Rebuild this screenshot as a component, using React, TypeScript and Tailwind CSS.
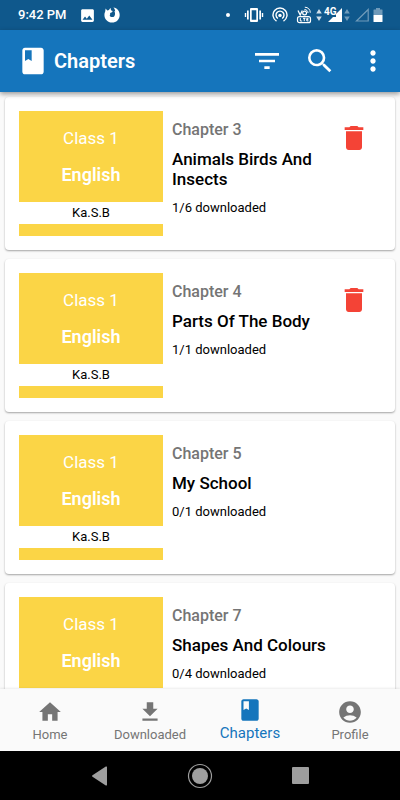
import { useState } from "react";
import {
  MdAccountCircle,
  MdClass,
  MdDelete,
  MdFileDownload,
  MdFilterList,
  MdHome,
  MdImage,
  MdMoreVert,
  MdSearch,
} from "react-icons/md";

type Chapter = {
  number: number;
  title: string;
  downloaded: number;
  total: number;
};

const initialChapters: Chapter[] = [
  { number: 3, title: "Animals Birds And Insects", downloaded: 1, total: 6 },
  { number: 4, title: "Parts Of The Body", downloaded: 1, total: 1 },
  { number: 5, title: "My School", downloaded: 0, total: 1 },
  { number: 7, title: "Shapes And Colours", downloaded: 0, total: 4 },
];

const tabs = [
  { name: "Home", Icon: MdHome },
  { name: "Downloaded", Icon: MdFileDownload },
  { name: "Chapters", Icon: MdClass },
  { name: "Profile", Icon: MdAccountCircle },
];

const FirefoxIcon = () => (
  <svg viewBox="0 0 16 16" className="size-4" aria-hidden="true">
    <path
      fill="currentColor"
      d="M1.600 1.500 3.300 3.400 5 3.100C5.400 2.100 6 1.400 6.800 1c-.2 1 0 1.900.5 2.500l1.400.5-.7 1.200-1.900.7.1 1.300c-.7.900-.5 2 .4 2.500 1.300.800 3.100.400 3.900-.8 1-1.500.6-3.500-.4-4.800l1.100.3C11.100 2.900 10.500 1.700 9.400.6c3.800.6 6.300 3.600 6.300 7.300 0 4.300-3.400 7.700-7.700 7.700S.4 12.200.4 8c0-1.300.2-2.500.8-3.500z"
    />
  </svg>
);

const VibrateIcon = () => (
  <svg viewBox="0 0 20 16" className="h-4 w-5" fill="currentColor" aria-hidden="true">
    <path fillRule="evenodd" d="M7 1h6a1 1 0 0 1 1 1v12a1 1 0 0 1-1 1H7a1 1 0 0 1-1-1V2a1 1 0 0 1 1-1zm.7 2.200v9.600h4.600V3.200z" />
    <path d="M3 3.500h1.700v9H3zM15.300 3.500H17v9h-1.700zM.8 6h1.400v4H.8zM17.800 6h1.400v4h-1.400z" />
  </svg>
);

const HotspotIcon = () => (
  <svg viewBox="0 0 16 16" className="size-4" fill="none" stroke="currentColor" strokeWidth="1.400" aria-hidden="true">
    <path d="M4.500 14.100a7 7 0 1 1 7 0" />
    <path d="M5.900 11.500a4 4 0 1 1 4.200 0" />
    <circle cx="8" cy="8.400" r="1.700" fill="currentColor" stroke="none" />
  </svg>
);

const VolteIcon = () => (
  <svg viewBox="0 0 16 18" className="h-[18px] w-4" fill="none" stroke="currentColor" aria-hidden="true">
    <path strokeWidth="1.300" d="M2 4.500 4.200 9 6.300 4.500" />
    <circle cx="8.600" cy="7" r="1.900" strokeWidth="1.200" />
    <path strokeWidth="1" d="M8.500 3.500c2 0 3.500 1.500 3.500 3.500M8.800 1.200c3.200 0 5.500 2.300 5.500 5.500" />
    <rect x="1.500" y="10.700" width="13" height="6" rx="2" strokeWidth="1.200" />
    <path strokeWidth="1" d="M4.300 12v3h1.900M7 12.300h2.500M8.250 12v3.200M12.500 12.300h-1.700v2.600h1.700M10.800 13.600h1.500" />
  </svg>
);

const DataArrows = ({ className }: { className?: string }) => (
  <svg viewBox="0 0 6 14" className={`h-3.5 w-1.5 ${className}`} fill="currentColor" aria-hidden="true">
    <path d="M3 1 5.800 5.500H.2zM3 13 .2 8.500h5.600z" />
  </svg>
);

const StatusBar = () => (
  <div className="flex h-[30px] shrink-0 items-center bg-[#0f588c] pr-[17px] pl-[18px] text-white">
    <span className="text-[13px] font-medium">9:42 PM</span>
    <MdImage size={17} className="ml-3" aria-hidden="true" />
    <span className="ml-2">
      <FirefoxIcon />
    </span>
    <span className="ml-auto size-1 rounded-full bg-white" />
    <span className="ml-3.5 flex items-center gap-2">
      <VibrateIcon />
      <HotspotIcon />
      <VolteIcon />
    </span>
    <DataArrows className="ml-1 opacity-80" />
    <span className="relative ml-0.5 h-4 w-[18px]">
      <span className="absolute top-0 left-0 text-[10px] leading-[10px] font-bold">4G</span>
      <svg viewBox="0 0 18 16" className="h-4 w-[18px]" fill="currentColor" aria-hidden="true">
        <path d="M18 1v14H4l5-5h3V7z" />
      </svg>
    </span>
    <DataArrows className="ml-0.5 opacity-40" />
    <svg viewBox="0 0 14 14" className="ml-[5px] size-3.5 opacity-40" fill="none" stroke="currentColor" strokeWidth="1.200" aria-hidden="true">
      <path d="M13.200 1.500v11.500H1.500z" />
    </svg>
    <svg viewBox="0 0 10 14" className="ml-1 h-3.5 w-2.5" fill="currentColor" aria-hidden="true">
      <path opacity=".4" d="M3 0h4v1.500h2a.5.5 0 0 1 .5.5v5h-9V2a.5.5 0 0 1 .5-.5h2z" />
      <path d="M.5 7h9v6.500a.5.500 0 0 1-.5.500H1a.5.500 0 0 1-.5-.500z" />
    </svg>
  </div>
);

const ChapterCard = ({ chapter, onDelete }: { chapter: Chapter; onDelete: () => void }) => (
  <li className="flex rounded-sm bg-white p-3.5 shadow-[0_1px_2px_rgba(0,0,0,0.35)]">
    <div className="w-36 shrink-0 bg-[#fbd546] text-center">
      <div className="flex h-[91px] flex-col items-center justify-center gap-[17px] text-white">
        <p className="text-[17px] leading-5">Class 1</p>
        <p className="text-lg leading-5 font-semibold">English</p>
      </div>
      <p className="mb-3 bg-white text-[13px] leading-[22px] text-black">Ka.S.B</p>
    </div>
    <div className="ml-[9px] flex min-w-0 flex-1 flex-col gap-[9px] pt-[9px] text-black">
      <p className="text-base leading-5 font-medium text-[#757575]">Chapter {chapter.number}</p>
      <h2 className="text-[17px] leading-5 font-medium">{chapter.title}</h2>
      <p className="text-[13px] leading-5">
        {chapter.downloaded}/{chapter.total} downloaded
      </p>
    </div>
    <div className="w-[43px] shrink-0 pt-[11px]">
      {chapter.downloaded > 0 && (
        <button type="button" onClick={onDelete} aria-label={`Delete chapter ${chapter.number}`} className="block text-[#f44336]">
          <MdDelete size={32} />
        </button>
      )}
    </div>
  </li>
);

const App = () => {
  const [chapters, setChapters] = useState(initialChapters);
  const [activeTab, setActiveTab] = useState("Chapters");

  const removeDownloads = (number: number) => {
    setChapters(chapters.map((c) => (c.number === number ? { ...c, downloaded: 0 } : c)));
  };

  return (
    <div className="flex h-screen flex-col bg-[#fafafa] font-['Roboto',sans-serif]">
      <StatusBar />

      <header className="z-10 flex h-[62px] shrink-0 items-center bg-[#1575bc] pr-[11px] pl-[17px] text-white shadow-[0_2px_5px_rgba(0,0,0,0.4)]">
        <MdClass size={32} aria-hidden="true" />
        <h1 className="ml-[5px] text-xl font-semibold">Chapters</h1>
        <div className="ml-auto flex gap-[21px]">
          <button type="button" aria-label="Filter">
            <MdFilterList size={32} />
          </button>
          <button type="button" aria-label="Search">
            <MdSearch size={32} />
          </button>
          <button type="button" aria-label="More options">
            <MdMoreVert size={32} />
          </button>
        </div>
      </header>

      {/* Chapter list */}
      <main className="min-h-0 flex-1 overflow-y-auto px-[5px] pt-[5px] [scrollbar-width:none]">
        <ul className="flex flex-col gap-[9px]">
          {chapters.map((chapter) => (
            <ChapterCard key={chapter.number} chapter={chapter} onDelete={() => removeDownloads(chapter.number)} />
          ))}
        </ul>
      </main>

      {/* Bottom tabs */}
      <nav className="z-10 grid h-[62px] shrink-0 grid-cols-4 bg-[#fafafa] shadow-[0_-1px_2px_rgba(0,0,0,0.08)]">
        {tabs.map(({ name, Icon }) => (
          <button
            key={name}
            type="button"
            onClick={() => setActiveTab(name)}
            className={`flex flex-col items-center leading-5 ${
              activeTab === name ? "pt-2 text-[15px] text-[#1575bc]" : "pt-[10px] text-[13px] text-[#757575]"
            }`}
          >
            <Icon size={26} aria-hidden="true" />
            {name}
          </button>
        ))}
      </nav>

      {/* System navigation */}
      <div className="grid h-[49px] shrink-0 grid-cols-[1fr_100px_100px_100px_1fr] items-center justify-items-center bg-black text-[#9e9e9e]">
        <button type="button" aria-label="Back" className="col-start-2">
          <svg viewBox="0 0 18 20" className="h-5 w-[18px]" fill="currentColor">
            <path d="M16 1.200v17.600a.8.800 0 0 1-1.200.7L1.500 10.700a.8.800 0 0 1 0-1.400L14.800.5a.8.800 0 0 1 1.200.7z" />
          </svg>
        </button>
        <button type="button" aria-label="Home screen">
          <svg viewBox="0 0 26 26" className="size-[26px]">
            <circle cx="13" cy="13" r="11.500" fill="none" stroke="currentColor" strokeWidth="1.200" />
            <circle cx="13" cy="13" r="8" fill="currentColor" />
          </svg>
        </button>
        <button type="button" aria-label="Recent apps" className="size-[17px] rounded-[1px] bg-[#9e9e9e]" />
      </div>
    </div>
  );
};

export default App;
